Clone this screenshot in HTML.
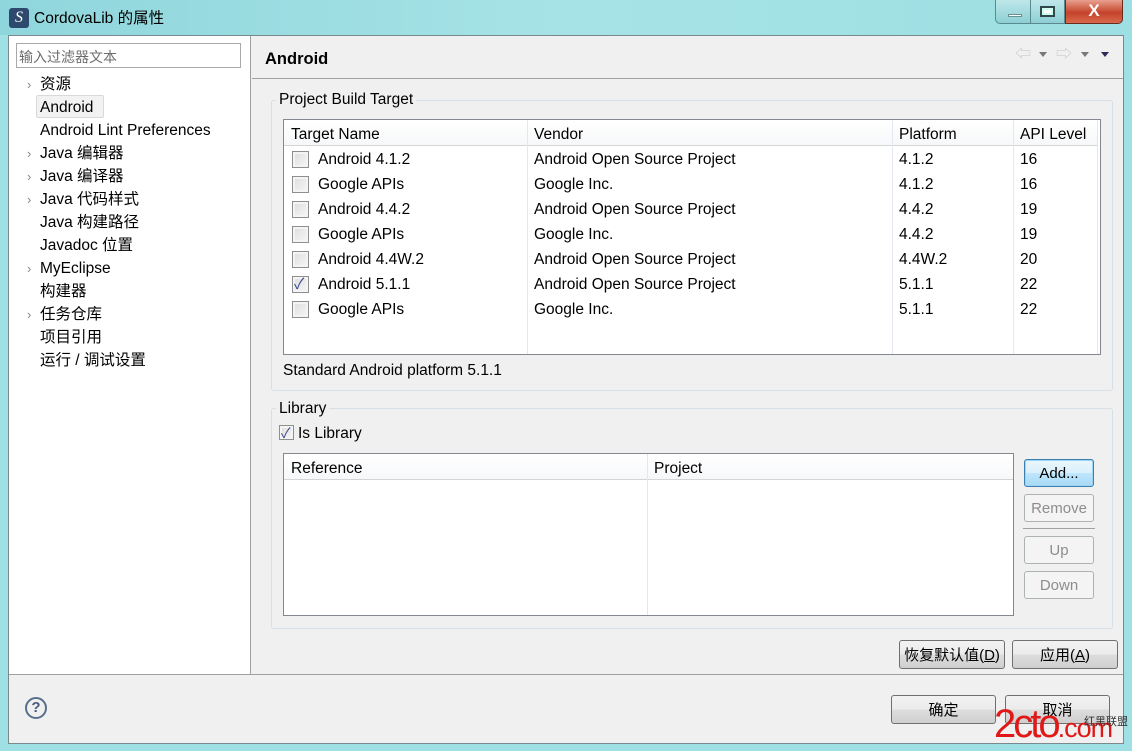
<!DOCTYPE html>
<html><head><meta charset="utf-8"><style>
*{margin:0;padding:0;box-sizing:border-box}
body{width:1132px;height:751px;position:relative;overflow:hidden;background:#9fe0e4;font-family:"Liberation Sans","Noto Sans CJK SC",sans-serif;font-size:15.5px;color:#000}
.a{position:absolute}
.t{position:absolute;white-space:nowrap;line-height:18px;margin-top:2px}
.btn{position:absolute;border:1px solid #707070;border-radius:3px;background:linear-gradient(#f2f2f2,#ebebeb 50%,#dddddd 51%,#cfcfcf);text-align:center;font-size:15px;line-height:27px}
.dis{border-color:#adb2b5;background:#f4f4f4;color:#8d8d8d}
.cb{position:absolute;width:17px;height:17px;border:1px solid #8f8f8f;background:linear-gradient(135deg,#dcdcdc,#f7f7f7);box-shadow:inset 0 0 0 2px #f4f4f4}
.hdr{position:absolute;background:linear-gradient(#ffffff,#f7f8fa);border-bottom:1px solid #d5d5d5}
.col{position:absolute;width:1px;background:#e3e8ef}
</style></head><body>
<div class="a" style="left:0;top:0;width:1132px;height:35px;background:linear-gradient(90deg,#8fd6dc,#a6e3e6 50%,#9ddfe2)"></div>
<div class="a" style="left:9px;top:8px;width:20px;height:20px;background:#2d4a6e;border-radius:3px;color:#fff;font-style:italic;font-size:16px;line-height:20px;text-align:center;font-family:'Liberation Serif'">S</div>
<div class="t" style="left:34px;top:8px">CordovaLib 的属性</div>
<div class="a" style="left:995px;top:0;width:70px;height:24px;border:1px solid #5a8a90;border-top:none;border-radius:0 0 0 5px;background:linear-gradient(#bfe7ea,#8ccfd4)"></div>
<div class="a" style="left:1030px;top:0;width:1px;height:24px;background:#5a8a90"></div>
<div class="a" style="left:1008px;top:14px;width:14px;height:3px;background:#fff;border:1px solid #6a8f94"></div>
<div class="a" style="left:1040px;top:6px;width:15px;height:11px;border:2px solid #30484c;background:#fff;box-shadow:inset 0 0 0 2px #cfe"></div>
<div class="a" style="left:1065px;top:0;width:58px;height:24px;border:1px solid #6b2a20;border-top:none;border-radius:0 0 5px 0;background:linear-gradient(#e8a08f,#c5432a 55%,#d86a4c);color:#fff;font-weight:bold;font-size:17px;text-align:center;line-height:22px">X</div>
<div class="a" style="left:8px;top:35px;width:1116px;height:709px;background:#f0f0f0;border:1px solid #7a8a8c"></div>
<div class="a" style="left:9px;top:36px;width:242px;height:638px;background:#fff;border-right:1px solid #a0a0a0"></div>
<div class="a" style="left:16px;top:43px;width:225px;height:25px;border:1px solid #a9a9a9;background:#fff"></div>
<div class="t" style="left:19px;top:46px;color:#6d6d6d;font-size:14px">输入过滤器文本</div>
<div class="a" style="left:36px;top:95px;width:68px;height:23px;background:#f2f2f2;border:1px solid #d9d9d9;border-radius:2px"></div>
<div class="t" style="left:40px;top:74px">资源</div>
<div class="t" style="left:40px;top:97px">Android</div>
<div class="t" style="left:40px;top:120px">Android Lint Preferences</div>
<div class="t" style="left:40px;top:143px">Java 编辑器</div>
<div class="t" style="left:40px;top:166px">Java 编译器</div>
<div class="t" style="left:40px;top:189px">Java 代码样式</div>
<div class="t" style="left:40px;top:212px">Java 构建路径</div>
<div class="t" style="left:40px;top:235px">Javadoc 位置</div>
<div class="t" style="left:40px;top:258px">MyEclipse</div>
<div class="t" style="left:40px;top:281px">构建器</div>
<div class="t" style="left:40px;top:304px">任务仓库</div>
<div class="t" style="left:40px;top:327px">项目引用</div>
<div class="t" style="left:40px;top:350px">运行 / 调试设置</div>
<div class="t" style="left:27px;top:74px;color:#888;font-size:13px">›</div>
<div class="t" style="left:27px;top:143px;color:#888;font-size:13px">›</div>
<div class="t" style="left:27px;top:166px;color:#888;font-size:13px">›</div>
<div class="t" style="left:27px;top:189px;color:#888;font-size:13px">›</div>
<div class="t" style="left:27px;top:258px;color:#888;font-size:13px">›</div>
<div class="t" style="left:27px;top:304px;color:#888;font-size:13px">›</div>
<div class="a" style="left:252px;top:78px;width:871px;height:1px;background:#a0a0a0"></div>
<div class="t" style="left:265px;top:48px;font-weight:bold;font-size:16.5px">Android</div>
<div class="t" style="left:1015px;top:44px;color:#ccc;font-size:16px">⇦</div>
<div class="t" style="left:1056px;top:44px;color:#ccc;font-size:16px">⇨</div>
<div class="a" style="left:1039px;top:52px;border:4px solid transparent;border-top:5px solid #777"></div>
<div class="a" style="left:1081px;top:52px;border:4px solid transparent;border-top:5px solid #777"></div>
<div class="a" style="left:1101px;top:52px;border:4px solid transparent;border-top:5px solid #302a5a"></div>
<div class="a" style="left:271px;top:100px;width:842px;height:291px;border:1px solid #d5dfe5;border-radius:3px"></div>
<div class="t" style="left:276px;top:89px;background:#f0f0f0;padding:0 3px">Project Build Target</div>
<div class="a" style="left:283px;top:119px;width:818px;height:236px;border:1px solid #828790;background:#fff"></div>
<div class="hdr" style="left:284px;top:120px;width:813px;height:26px"></div>
<div class="col" style="left:527px;top:120px;height:234px"></div>
<div class="col" style="left:892px;top:120px;height:234px"></div>
<div class="col" style="left:1013px;top:120px;height:234px"></div>
<div class="col" style="left:1097px;top:120px;height:234px"></div>
<div class="t" style="left:291px;top:124px">Target Name</div>
<div class="t" style="left:534px;top:124px">Vendor</div>
<div class="t" style="left:899px;top:124px">Platform</div>
<div class="t" style="left:1020px;top:124px">API Level</div>
<div class="cb" style="left:292px;top:151px"></div>
<div class="cb" style="left:292px;top:176px"></div>
<div class="cb" style="left:292px;top:201px"></div>
<div class="cb" style="left:292px;top:226px"></div>
<div class="cb" style="left:292px;top:251px"></div>
<div class="cb" style="left:292px;top:276px"></div>
<div class="cb" style="left:292px;top:301px"></div>
<div class="t" style="left:294px;top:274px;color:#3a4a8a;font-size:15px">✓</div>
<div class="t" style="left:318px;top:149px">Android 4.1.2</div><div class="t" style="left:534px;top:149px">Android Open Source Project</div><div class="t" style="left:899px;top:149px">4.1.2</div><div class="t" style="left:1020px;top:149px">16</div>
<div class="t" style="left:318px;top:174px">Google APIs</div><div class="t" style="left:534px;top:174px">Google Inc.</div><div class="t" style="left:899px;top:174px">4.1.2</div><div class="t" style="left:1020px;top:174px">16</div>
<div class="t" style="left:318px;top:199px">Android 4.4.2</div><div class="t" style="left:534px;top:199px">Android Open Source Project</div><div class="t" style="left:899px;top:199px">4.4.2</div><div class="t" style="left:1020px;top:199px">19</div>
<div class="t" style="left:318px;top:224px">Google APIs</div><div class="t" style="left:534px;top:224px">Google Inc.</div><div class="t" style="left:899px;top:224px">4.4.2</div><div class="t" style="left:1020px;top:224px">19</div>
<div class="t" style="left:318px;top:249px">Android 4.4W.2</div><div class="t" style="left:534px;top:249px">Android Open Source Project</div><div class="t" style="left:899px;top:249px">4.4W.2</div><div class="t" style="left:1020px;top:249px">20</div>
<div class="t" style="left:318px;top:274px">Android 5.1.1</div><div class="t" style="left:534px;top:274px">Android Open Source Project</div><div class="t" style="left:899px;top:274px">5.1.1</div><div class="t" style="left:1020px;top:274px">22</div>
<div class="t" style="left:318px;top:299px">Google APIs</div><div class="t" style="left:534px;top:299px">Google Inc.</div><div class="t" style="left:899px;top:299px">5.1.1</div><div class="t" style="left:1020px;top:299px">22</div>
<div class="t" style="left:283px;top:360px">Standard Android platform 5.1.1</div>
<div class="a" style="left:271px;top:408px;width:842px;height:221px;border:1px solid #d5dfe5;border-radius:3px"></div>
<div class="t" style="left:276px;top:398px;background:#f0f0f0;padding:0 3px">Library</div>
<div class="cb" style="left:279px;top:425px;width:15px;height:15px"></div>
<div class="t" style="left:281px;top:422px;color:#3a4a8a;font-size:14px">✓</div>
<div class="t" style="left:298px;top:423px">Is Library</div>
<div class="a" style="left:283px;top:453px;width:731px;height:163px;border:1px solid #828790;background:#fff"></div>
<div class="hdr" style="left:284px;top:454px;width:729px;height:26px"></div>
<div class="col" style="left:647px;top:454px;height:161px"></div>
<div class="t" style="left:291px;top:458px">Reference</div>
<div class="t" style="left:654px;top:458px">Project</div>
<div class="btn" style="left:1024px;top:459px;width:70px;height:28px;border-color:#3c7fb1;background:linear-gradient(#eaf6fd,#d9f0fc 50%,#bee6fd 51%,#a7d9f5);box-shadow:inset 0 0 0 1px #9cd5f3">Add...</div>
<div class="btn dis" style="left:1024px;top:494px;width:70px;height:28px">Remove</div>
<div class="a" style="left:1023px;top:528px;width:72px;height:1px;background:#a0a0a0"></div>
<div class="btn dis" style="left:1024px;top:536px;width:70px;height:28px">Up</div>
<div class="btn dis" style="left:1024px;top:571px;width:70px;height:28px">Down</div>
<div class="btn" style="left:899px;top:640px;width:106px;height:29px;line-height:29px">恢复默认值(<u>D</u>)</div>
<div class="btn" style="left:1012px;top:640px;width:106px;height:29px;line-height:29px">应用(<u>A</u>)</div>
<div class="a" style="left:9px;top:674px;width:1114px;height:1px;background:#a0a0a0"></div>
<div class="a" style="left:25px;top:697px;width:22px;height:22px;border:2px solid #5a6e8e;border-radius:50%;color:#4a5a7e;font-weight:bold;font-size:15px;text-align:center;line-height:18px">?</div>
<div class="btn" style="left:891px;top:695px;width:105px;height:29px;line-height:29px">确定</div>
<div class="btn" style="left:1005px;top:695px;width:105px;height:29px;line-height:29px">取消</div>
<div class="a" style="left:994px;top:704px;color:#e01818;font-size:40px;line-height:40px;letter-spacing:-3px;white-space:nowrap;font-family:'Liberation Sans'">2cto<span style="font-size:27px;letter-spacing:-1px">.com</span></div>
<div class="t" style="left:1084px;top:711px;color:#333;font-size:11px">红黑联盟</div>
</body></html>
